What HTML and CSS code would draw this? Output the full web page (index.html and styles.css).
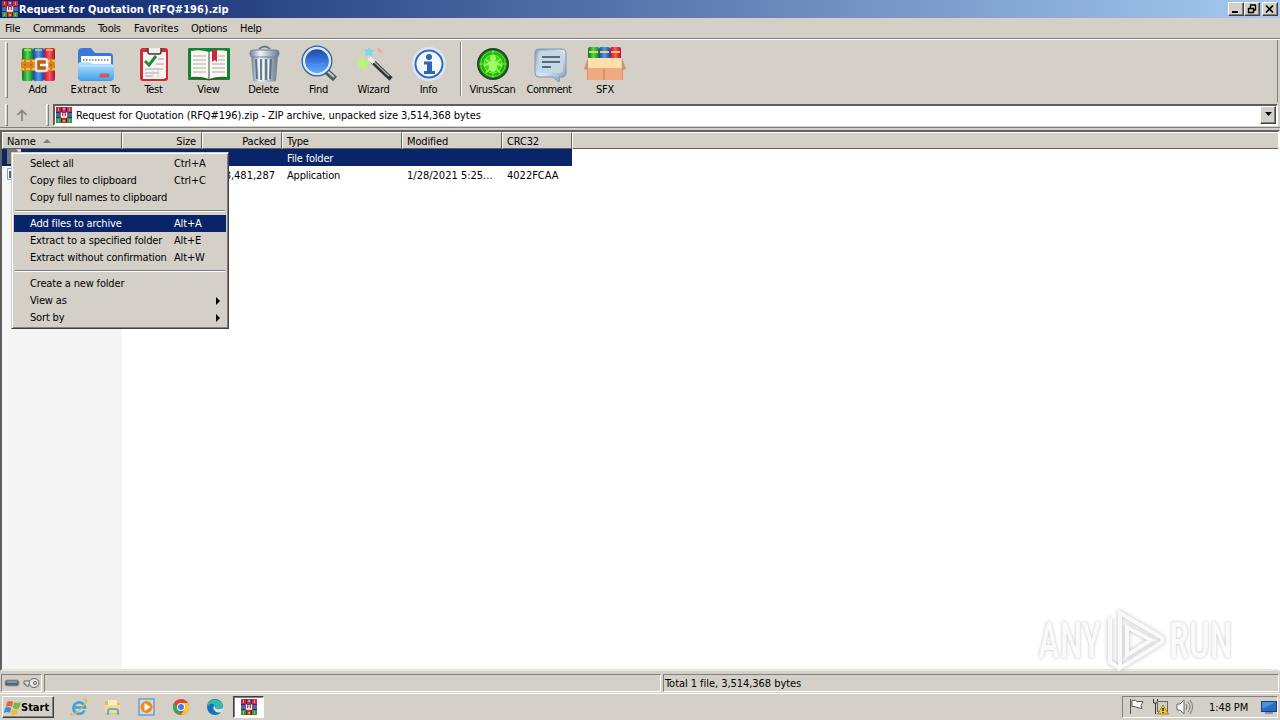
FILE: index.html
```html
<!DOCTYPE html>
<html lang="en">
<head>
    <meta charset="UTF-8">
    <meta name="viewport" content="width=device-width, initial-scale=1.0">
    <title>Request for Quotation (RFQ#196).zip</title>
    <link rel="stylesheet" href="styles.css">
</head>
<body>
    <svg class="defs" width="0" height="0">
        <defs>
            <linearGradient id="glass" x1="0" y1="0" x2="0" y2="1"><stop offset="0" stop-color="#b9e6ff"/><stop offset="1" stop-color="#439ce9"/></linearGradient>
            <linearGradient id="metal"><stop offset="0" stop-color="#718397"/><stop offset=".35" stop-color="#f1f6fa"/><stop offset=".7" stop-color="#a3b2c1"/><stop offset="1" stop-color="#66788c"/></linearGradient>
            <linearGradient id="lens" x1="0" y1="0" x2="0" y2="1"><stop offset="0" stop-color="#1c419f"/><stop offset=".55" stop-color="#397ee7"/><stop offset="1" stop-color="#65b8ff"/></linearGradient>
            <linearGradient id="bubble" x1="0" y1="0" x2="1" y2="1"><stop offset="0" stop-color="#8ba5c2"/><stop offset=".5" stop-color="#dae8f5"/><stop offset="1" stop-color="#7b96b5"/></linearGradient>
            <linearGradient id="gr"><stop offset="0" stop-color="#08751f"/><stop offset=".5" stop-color="#52d85a"/><stop offset="1" stop-color="#0b8126"/></linearGradient>
            <linearGradient id="bl"><stop offset="0" stop-color="#1749a6"/><stop offset=".5" stop-color="#5397ef"/><stop offset="1" stop-color="#1b48aa"/></linearGradient>
            <linearGradient id="rd"><stop offset="0" stop-color="#b61532"/><stop offset=".5" stop-color="#fa5665"/><stop offset="1" stop-color="#b30b2b"/></linearGradient>
            <radialGradient id="radar"><stop offset="0" stop-color="#8dff32"/><stop offset=".6" stop-color="#26c90c"/><stop offset="1" stop-color="#04870d"/></radialGradient>
            <symbol id="rar" viewBox="0 0 16 16">
                <path fill="#5a2030" d="M0 0h16v16H0z"/>
                <path fill="#c8243f" d="M0 0h5v5H0z"/><path fill="#a02f9a" d="M6 0h4v5H6z"/><path fill="#d22a58" d="M11 0h5v5h-5z"/>
                <path fill="#2f6fc4" d="M0 6h4v4H0zM12 6h4v4h-4z"/>
                <path fill="#2c9a50" d="M0 11h5v5H0zM11 11h5v5h-5z"/><path fill="#c0392b" d="M6 11h4v5H6z"/>
                <path fill="#e0a048" d="M2 1h1v3H2zM13 1h1v3h-1zM2 12h1v3H2zM13 12h1v3h-1zM7 1h2v2H7zM7 13h2v2H7z"/>
                <rect x="4" y="5" width="8" height="6" fill="#8a2e50"/>
                <path d="M5.500 5.500v4.500h5V5.500M8 6v3.500" fill="none" stroke="#fff" stroke-width="1.300"/>
            </symbol>
        </defs>
    </svg>

    <div class="window">
        <div class="titlebar">
            <svg class="icon16"><use href="#rar"/></svg>
            <h1>Request for Quotation (RFQ#196).zip</h1>
            <div class="win-buttons">
                <button><svg width="12" height="10"><path d="M2 8h6" stroke="#000" stroke-width="2"/></svg></button>
                <button><svg width="12" height="10"><path d="M4 1h6M9.500 1v5M4.500 1v3M2 4.500h6M2.500 4v5M7.500 4v5M2 8.500h6M8 6h2" fill="none" stroke="#000" stroke-width="1.400"/></svg></button>
                <button class="close"><svg width="12" height="10"><path d="M2 1.500l7 7M9 1.500l-7 7" stroke="#000" stroke-width="1.700"/></svg></button>
            </div>
        </div>

        <div class="menubar">
            <span class="m-file">File</span>
            <span class="m-commands">Commands</span>
            <span class="m-tools">Tools</span>
            <span class="m-favorites">Favorites</span>
            <span class="m-options">Options</span>
            <span>Help</span>
        </div>

        <div class="toolbar">
            <i class="grip"></i>
            <div class="tool">
                <svg width="38" height="38" viewBox="0 0 38 38">
                    <rect x="3" y="3" width="11" height="33" rx="2" fill="url(#gr)"/>
                    <rect x="14" y="3" width="11" height="33" rx="2" fill="url(#bl)"/>
                    <rect x="25" y="3" width="11" height="33" rx="2" fill="url(#rd)"/>
                    <path d="M5 5h7M16 5h7M27 5h7" stroke="#d3dc55" stroke-width="1.500"/>
                    <path d="M2 14h34v12H2z" fill="#d9851d"/>
                    <path d="M2 16h34M2 24h34" stroke="#ffc35c" stroke-width="1.500"/>
                    <path d="M6 15v10M12 15v10M32 15v10" stroke="#9f4f0d" stroke-dasharray="2 2"/>
                    <rect x="17" y="14" width="11" height="12" rx="2" fill="#b75d18" stroke="#e6e6df" stroke-width="2.500"/>
                    <path d="M21 20h8" stroke="#fff" stroke-width="2.500"/>
                </svg>
                <span>Add</span>
            </div>
            <div class="tool extract">
                <svg width="38" height="38" viewBox="0 0 38 38">
                    <path d="M1 34V7q0-4 4-4h9l4 5h15q3 0 3 4v22z" fill="#3b78de"/>
                    <path d="M4 11h30v17H4z" fill="#fff"/>
                    <path d="M6 15h26" stroke="#8197ad" stroke-width="2" stroke-dasharray="1.500 1.500"/>
                    <path d="M1 20q0-3 3-3h9l3 2h18q3 0 3 3v10q0 4-4 4H5q-4 0-4-4z" fill="url(#glass)"/>
                    <path d="M2 21h34" stroke="#c8edff"/>
                    <rect x="23" y="29" width="9" height="3" rx="1" fill="#f2543b" stroke="#a94749" stroke-width=".5"/>
                </svg>
                <span>Extract To</span>
            </div>
            <div class="tool">
                <svg width="38" height="38" viewBox="0 0 38 38">
                    <rect x="5" y="3" width="28" height="33" rx="3" fill="#d02b39"/>
                    <path d="M8 7h23v26l-3 1H8z" fill="#f7f4f1"/>
                    <path d="M13 3v4q0 2 2 2h9q2 0 2-2V3" fill="#eee" stroke="#4c3039" stroke-width="1.500"/>
                    <path d="M10 16l4 4 7-9" fill="none" stroke="#218b42" stroke-width="3"/>
                    <path d="M23 14h6M21 19h8M10 24h18M10 28h14M10 31h7" stroke="#a6a2a7"/>
                    <path d="M18 26v7M23 24v8" stroke="#ccc"/>
                </svg>
                <span>Test</span>
            </div>
            <div class="tool">
                <svg width="44" height="38" viewBox="0 0 44 38">
                    <rect x="1" y="3" width="42" height="32" rx="1" fill="#168237"/>
                    <path d="M4 6q9-2 18 1 9-3 18-1v26q-10-1-18 2-8-3-18-2z" fill="#f8f8f3"/>
                    <path d="M5 33q9-1 17 2 9-3 17-2" fill="none" stroke="#5b3b2b"/>
                    <path d="M22 7v27" stroke="#9f9f9c" stroke-width="2"/>
                    <path d="M6 11h13M6 15h13M6 19h13M6 23h13M6 27h13M25 19h13M25 23h13M25 27h13M31 11h7M31 15h7" stroke="#aaa"/>
                    <path d="M25 5h5v12l-2.500-2-2.500 2z" fill="#c82a37"/>
                </svg>
                <span>View</span>
            </div>
            <div class="tool">
                <svg width="38" height="38" viewBox="0 0 38 38">
                    <path d="M14 4q6-5 11 0" fill="none" stroke="#687a8d" stroke-width="2"/>
                    <path d="M6 9h27l-2 27q-11 2-23 0z" fill="url(#metal)"/>
                    <path d="M11 14l1 20M16 14v21M21 14v21M26 14l-1 20" stroke="#5d7086" stroke-width="1.800"/>
                    <path d="M13.500 14l1 20M18.500 14v21M23.500 14v21" stroke="#f0f5f8"/>
                    <rect x="5" y="5" width="29" height="7" rx="3" fill="url(#metal)" stroke="#718295"/>
                </svg>
                <span>Delete</span>
            </div>
            <div class="tool">
                <svg width="38" height="38" viewBox="0 0 38 38">
                    <path d="M25 25l10 9" stroke="#515961" stroke-width="6"/>
                    <path d="M25 24l9 8" stroke="#c6ced5" stroke-width="2"/>
                    <circle cx="17" cy="16" r="13.500" fill="url(#lens)" stroke="#295da9" stroke-width="4"/>
                    <circle cx="17" cy="16" r="13" fill="none" stroke="#dce8f4" stroke-width="2.500"/>
                    <path d="M10 18q7 4 14 0" fill="none" stroke="#6790dc"/>
                </svg>
                <span>Find</span>
            </div>
            <div class="tool">
                <svg width="38" height="38" viewBox="0 0 38 38">
                    <path d="M16 15l20 19" stroke="#313437" stroke-width="4.500"/>
                    <path d="M16 14l18 17" stroke="#a9aaab" stroke-width="1.500"/>
                    <path d="M14 13l5 4.500" stroke="#eee" stroke-width="4.500"/>
                    <path d="M8 11l2 5 6 1-5 3 1 5-5-3-4 1 1-5-3-4 5 1z" fill="#b2f96c"/>
                    <path d="M14 2l2 3 4 0-3 3 1 4-4-2-4 1 1-4-2-3h4z" fill="#79dbe7"/>
                    <path d="M24 2l2 3 3 1-4 2-3-2z" fill="#eeaaa3"/>
                </svg>
                <span>Wizard</span>
            </div>
            <div class="tool">
                <svg width="38" height="38" viewBox="0 0 38 38">
                    <circle cx="19" cy="19" r="16" fill="#e8f2fc" stroke="#d7e7f7" stroke-width="2"/>
                    <circle cx="19" cy="19" r="13.500" fill="#f1f8ff" stroke="#3c67b9" stroke-width="2"/>
                    <circle cx="19" cy="12" r="3" fill="#3262bc"/>
                    <path d="M14 16.500h8V26h3v3H14v-3h3v-6.500h-3z" fill="#3262bc"/>
                </svg>
                <span>Info</span>
            </div>
            <i class="separator"></i>
            <div class="tool virus">
                <svg width="38" height="38" viewBox="0 0 38 38">
                    <circle cx="19" cy="19" r="15" fill="url(#radar)" stroke="#25482b" stroke-width="2"/>
                    <g fill="none" stroke="#a3f46b" stroke-width=".7"><circle cx="19" cy="19" r="12.500"/><circle cx="19" cy="19" r="9"/><path d="M19 5v28M5 19h28"/></g>
                    <ellipse cx="19" cy="21" rx="4" ry="6" fill="#a2fa65"/><circle cx="19" cy="13" r="3" fill="#a2fa65"/>
                    <path d="M11 14l5 4-6 3M27 14l-5 4 6 3M12 28l4-5M26 28l-4-5" fill="none" stroke="#a2fa65" stroke-width="1.500"/>
                </svg>
                <span>VirusScan</span>
            </div>
            <div class="tool comment">
                <svg width="38" height="38" viewBox="0 0 38 38">
                    <path d="M9 4h22q5 0 5 5v18q0 5-4 5h-3q1 3 0 5-4-3-6-5H9q-4 0-4-4V8q0-4 4-4z" fill="url(#bubble)" stroke="#7f95ac"/>
                    <rect x="8" y="6" width="25" height="22" rx="3" fill="#c5d6e7"/>
                    <path d="M12 12h18M12 17h18M12 22h9" stroke="#34475e" stroke-width="1.500"/>
                </svg>
                <span>Comment</span>
            </div>
            <div class="tool sfx">
                <svg width="42" height="38" viewBox="0 0 42 38">
                    <rect x="4" y="2" width="11" height="17" rx="2" fill="url(#gr)"/><rect x="15" y="2" width="11" height="17" rx="2" fill="url(#bl)"/><rect x="26" y="2" width="11" height="17" rx="2" fill="url(#rd)"/>
                    <path d="M5 7h9M16 7h9M27 7h9" stroke="#f2d242" stroke-width="2"/>
                    <path d="M3 13h34v11H4z" fill="#fbe0ab"/>
                    <path d="M4 13L0 24l3 1v10h36V25l3-1-4-11v11H4z" fill="#d98e68"/>
                    <path d="M4 23h34v12H4z" fill="#edab84"/><path d="M20 24v11" stroke="#c77753"/>
                </svg>
                <span>SFX</span>
            </div>
        </div>

        <div class="addressbar">
            <i class="grip"></i>
            <svg class="up" width="14" height="14"><path d="M7 13V3M2.500 7L7 2.500 11.500 7" fill="none" stroke="#858585" stroke-width="1.700"/></svg>
            <i class="grip second"></i>
            <div class="combo">
                <svg class="icon16"><use href="#rar"/></svg>
                <span>Request for Quotation (RFQ#196).zip - ZIP archive, unpacked size 3,514,368 bytes</span>
                <button><svg width="9" height="5"><path d="M1 0h7L4.500 4z"/></svg></button>
            </div>
        </div>

        <div class="list">
            <div class="row head">
                <div class="col-name">Name <i class="sort"></i></div>
                <div class="col-size">Size</div>
                <div class="col-packed">Packed</div>
                <div class="col-type">Type</div>
                <div class="col-modified">Modified</div>
                <div class="col-crc">CRC32</div>
                <div class="col-rest"></div>
            </div>
            <div class="row selected">
                <div class="col-name"><svg width="16" height="17"><path d="M0 0h9l2 3h3v12H0z" fill="#77777b"/><path d="M9 0h5v3h-3z" fill="#d5d1cc"/></svg></div>
                <div class="col-size"></div>
                <div class="col-packed"></div>
                <div class="col-type">File folder</div>
                <div class="col-modified"></div>
                <div class="col-crc"></div>
            </div>
            <div class="row">
                <div class="col-name"><svg width="16" height="17"><path d="M.5 2.500h14v11H.5z" fill="#fff" stroke="#8ca0b5"/><path d="M2 5h11v7H2z" fill="#34699c"/></svg></div>
                <div class="col-size"></div>
                <div class="col-packed">3,481,287</div>
                <div class="col-type">Application</div>
                <div class="col-modified">1/28/2021 5:25...</div>
                <div class="col-crc">4022FCAA</div>
            </div>
        </div>

        <div class="statusbar">
            <div class="pane drive">
                <svg width="37" height="16">
                    <rect x="1" y="5" width="14" height="6" rx="2" fill="#56616a" stroke="#949da3"/><path d="M3 7h10" stroke="#bcc7cd"/>
                    <path d="M20 6h7v3h-2v2h-3V9h-2z" fill="#e5e5e2" stroke="#656565"/>
                    <ellipse cx="30" cy="8" rx="5" ry="4.500" fill="#e5e5e2" stroke="#656565"/><circle cx="31" cy="8" r="1.500" fill="#fff" stroke="#555"/>
                </svg>
            </div>
            <div class="pane selection"></div>
            <div class="pane total">Total 1 file, 3,514,368 bytes</div>
        </div>
    </div>

    <div class="taskbar">
        <button class="start">
            <svg width="19" height="17">
                <path d="M4 3q4-2 6 0L9 8Q6 6 3 8z" fill="#e6662b"/><path d="M11 3q3 2 7 0l-2 6q-3 2-6 0z" fill="#73b943"/>
                <path d="M2 9q4-2 6 0l-1 5q-3-2-6 0z" fill="#3b8dd5"/><path d="M9 10q3 2 6 0l-1 5q-3 2-6 0z" fill="#f3bd32"/>
            </svg>
            Start
        </button>
        <div class="apps">
            <svg width="18" height="18">
                <path d="M14.500 12.500A5.800 5.800 0 1 1 15 9.500H5" fill="none" stroke="#38a6dd" stroke-width="2.600"/>
                <path d="M2 15Q-1 18 3 16.500 11 13 16 4q2-4-3-2" fill="none" stroke="#e7b944" stroke-width="1.300"/>
            </svg>
            <svg width="18" height="18">
                <path d="M1 3h6l1 2h8v11H1z" fill="#e7bb59"/><path d="M4 2h9v6H4z" fill="#f8edc3"/>
                <path d="M1 7h15v8H1z" fill="#f4db8d"/><path d="M4 17v-4q0-2 2-2h6q2 0 2 2v4" fill="none" stroke="#69add6" stroke-width="2.200"/>
            </svg>
            <svg width="18" height="18">
                <rect x="1" y="1" width="15" height="16" fill="#c9dceb" stroke="#3e83bc"/>
                <circle cx="8.500" cy="9" r="6" fill="#f28a19"/><path d="M6.500 5l6 4-6 4z" fill="#fff"/>
            </svg>
            <svg width="18" height="18">
                <circle cx="9" cy="9" r="8" fill="#dc4535"/><path d="M2 5l5 7 2 5A8 8 0 0 1 2 5z" fill="#35a85a"/>
                <path d="M9 5h7a8 8 0 0 1-7 12l4-7z" fill="#f3c935"/><circle cx="9" cy="9" r="4" fill="#fff"/><circle cx="9" cy="9" r="3" fill="#397fe5"/>
            </svg>
            <svg width="18" height="18">
                <circle cx="9" cy="9" r="8" fill="#1671b6"/><path d="M2 5Q9-2 16 5q2 4-1 6-4 2-6-1 2-3-2-4Q4 5 2 8z" fill="#39bca4"/>
                <path d="M9 7q-4 3 1 7 3 1 6 0l2-5q-3 3-7 2-3-1-2-4z" fill="#d5e5e7"/>
            </svg>
        </div>
        <div class="task"><svg class="icon16"><use href="#rar"/></svg></div>
        <div class="tray">
            <svg width="18" height="18"><path d="M2.500 1v15M4 2.500q4-1 5 1h6l-2 4 1 3-5-1q-1-1.500-5-1z" fill="#fff" stroke="#555"/></svg>
            <svg width="18" height="18">
                <path d="M1.500 1v4h4V1M3.500 5v11" fill="none" stroke="#333"/><rect x="5.500" y="3.500" width="10" height="10" fill="#ccd1c6" stroke="#666"/>
                <path d="M11 7l5.500 9h-11z" fill="#f5cd23" stroke="#a97f17"/><path d="M11 10v3M11 14v1" stroke="#222" stroke-width="1.500"/>
            </svg>
            <svg width="18" height="18"><path d="M1 6h3l4-4v14l-4-4H1z" fill="#fff" stroke="#666"/><path d="M10 6q2 3 0 6M12 4q4 5 0 10M14 2q5 7 0 14" fill="none" stroke="#777"/></svg>
            <span class="clock">1:48 PM</span>
            <svg class="desktop" width="16" height="16"><rect x=".5" y="2.500" width="15" height="10" fill="#286bc4" stroke="#183e79"/><path d="M1 10l14-7H1z" fill="#4b91df"/><path d="M4 14h8" stroke="#8196b5" stroke-width="2"/></svg>
        </div>
    </div>

    <div class="context-menu">
        <div class="item"><span>Select all</span><span>Ctrl+A</span></div>
        <div class="item"><span>Copy files to clipboard</span><span>Ctrl+C</span></div>
        <div class="item"><span>Copy full names to clipboard</span></div>
        <hr>
        <div class="item active"><span>Add files to archive</span><span>Alt+A</span></div>
        <div class="item"><span>Extract to a specified folder</span><span>Alt+E</span></div>
        <div class="item"><span>Extract without confirmation</span><span>Alt+W</span></div>
        <hr>
        <div class="item"><span>Create a new folder</span></div>
        <div class="item"><span>View as</span><i></i></div>
        <div class="item"><span>Sort by</span><i></i></div>
    </div>

    <div class="watermark">
        <span>ANY</span>
        <svg width="58" height="62" viewBox="0 0 58 62">
            <path d="M13 3l41 24q3 3 0 6L13 58zM3 8v44l9 6M20 17l24 13-24 15z"/>
        </svg>
        <span>RUN</span>
    </div>
</body>
</html>
```
FILE: styles.css
```css
* {
    box-sizing: border-box;
}
body {
    margin: 0;
    width: 1280px;
    height: 720px;
    overflow: hidden;
    display: flex;
    flex-direction: column;
    position: relative;
    background-color: #d4d0c8;
    font-family: "DejaVu Sans Condensed", "DejaVu Sans", sans-serif;
    font-stretch: condensed;
    font-size: 11px;
    letter-spacing: -0.3px;
    color: #000;
    white-space: nowrap;
}
button {
    font: inherit;
    color: #000;
    padding: 0;
    background-color: #d4d0c8;
    border: 1px solid;
    border-color: #fff #404040 #404040 #fff;
    box-shadow: inset -1px -1px #808080;
}
svg {
    display: block;
    flex: none;
}
.defs {
    position: absolute;
}
.icon16 {
    width: 16px;
    height: 16px;
}
.window {
    height: 693px;
    display: flex;
    flex-direction: column;
}
.titlebar {
    height: 18px;
    display: flex;
    align-items: center;
    padding: 0 2px;
    background: linear-gradient(to right, #0a246a, #a6caf0);
}
.titlebar h1 {
    margin: 0 0 0 1px;
    flex: 1;
    font-size: 11px;
    color: #fff;
    letter-spacing: 0.03px;
}
.win-buttons {
    display: flex;
}
.win-buttons button {
    width: 16px;
    height: 14px;
    display: flex;
    align-items: center;
    justify-content: center;
}
.win-buttons .close {
    margin-left: 2px;
}
.menubar {
    height: 20px;
    display: flex;
    align-items: center;
    padding-left: 5px;
}
.m-file { width: 28px; }
.m-commands {
    width: 65px;
    letter-spacing: -0.5px;
}
.m-tools { width: 36px; }
.m-favorites {
    width: 57px;
    letter-spacing: 0;
}
.m-options { width: 49px; }
.toolbar {
    height: 64px;
    display: flex;
    padding: 3px 0 0 5px;
    border-top: 1px solid #808080;
    box-shadow: inset 0 1px #fff, inset -2px 0 #d4d0c8, inset -3px 0 #808080;
}
.grip {
    width: 3px;
    height: 56px;
    margin-right: 2px;
    border: 1px solid;
    border-color: #fff #808080 #808080 #fff;
}
.tool {
    width: 55px;
    padding-top: 3px;
    display: flex;
    flex-direction: column;
    align-items: center;
}
.tool span {
    line-height: 12px;
    margin-top: 1px;
}
.extract {
    width: 61px;
    letter-spacing: 0.1px;
}
.separator {
    width: 2px;
    height: 54px;
    margin: 0 3px 0 4px;
    border-left: 1px solid #808080;
    border-right: 1px solid #fff;
}
.comment {
    width: 58px;
    letter-spacing: -0.5px;
}
.sfx {
    width: 54px;
}
.addressbar {
    height: 26px;
    display: flex;
    align-items: center;
    padding: 0 2px 0 5px;
    border-bottom: 1px solid #808080;
}
.addressbar .grip {
    height: 22px;
}
.up {
    margin: 0 17px 0 5px;
}
.addressbar .second {
    margin-right: 4px;
}
.combo {
    flex: 1;
    height: 22px;
    display: flex;
    align-items: center;
    padding-left: 1px;
    background-color: #fff;
    border: 2px solid;
    border-color: #606060 #fff #fff #606060;
}
.combo span {
    flex: 1;
    padding: 1px 0 0 4px;
    letter-spacing: -0.07px;
}
.combo button {
    width: 16px;
    height: 18px;
    display: flex;
    align-items: center;
    justify-content: center;
}
.list {
    flex: 1;
    margin-top: 2px;
    display: flex;
    flex-direction: column;
    border: 2px solid;
    border-color: #606060 #fff #e8e6e2 #606060;
    background: linear-gradient(to right, #f5f5f5 120px, #fff 120px);
    letter-spacing: 0;
}
.row {
    display: flex;
    height: 17px;
    line-height: 19px;
}
.row > div {
    padding: 0 5px;
}
.row .col-packed {
    padding-right: 7px;
}
.head {
    background-color: #d4d0c8;
    letter-spacing: -0.15px;
}
.head > div {
    border-top: 1px solid #fff;
    border-left: 1px solid #fff;
    border-right: 1px solid #606060;
    border-bottom: 1px solid #606060;
    line-height: 17px;
}
.head > div,
.head .col-packed {
    padding: 0 5px 0 4px;
}
.row .col-name { width: 120px; }
.row .col-size { width: 80px; text-align: right; }
.row .col-packed { width: 80px; text-align: right; }
.row .col-type {
    width: 120px;
    letter-spacing: -0.2px;
}
.row .col-modified { width: 100px; }
.row .col-crc { width: 70px; }
.row .col-rest { flex: 1; border-right: none; }
.selected {
    width: 570px;
    background-color: #0a246a;
    color: #fff;
}
.sort {
    display: inline-block;
    margin: 0 0 2px 4px;
    border: 4px solid transparent;
    border-top: none;
    border-bottom-color: #808080;
}
.statusbar {
    height: 22px;
    display: flex;
    gap: 2px;
    padding: 3px 1px 1px;
}
.pane {
    border: 1px solid;
    border-color: #808080 #fff #fff #808080;
    line-height: 18px;
}
.drive {
    width: 41px;
    padding-left: 2px;
}
.selection {
    width: 617px;
}
.total {
    flex: 1;
    padding-left: 1px;
    letter-spacing: -0.05px;
}
.taskbar {
    height: 27px;
    display: flex;
    align-items: center;
    padding: 0 2px;
    border-top: 1px solid #fff;
}
.start {
    width: 52px;
    height: 22px;
    display: flex;
    align-items: center;
    font-weight: bold;
    letter-spacing: 0;
}
.start svg {
    margin-right: -1px;
}
.apps {
    display: flex;
    gap: 16px;
    padding-left: 16px;
}
.task {
    width: 31px;
    height: 22px;
    margin-left: 9px;
    padding: 2px 7px;
    background-color: #fff;
    border: 1px solid;
    border-color: #404040 #fff #fff #404040;
    box-shadow: inset 1px 1px #808080;
}
.tray {
    margin-left: auto;
    width: 156px;
    height: 22px;
    display: flex;
    align-items: center;
    gap: 6px;
    padding-left: 5px;
    border: 1px solid;
    border-color: #808080 #fff #fff #808080;
}
.clock {
    margin-left: 9px;
    letter-spacing: -0.1px;
}
.desktop {
    margin-left: auto;
}
.context-menu {
    position: absolute;
    left: 11px;
    top: 152px;
    width: 218px;
    height: 177px;
    padding: 2px;
    background-color: #d4d0c8;
    border: 1px solid;
    border-color: #d4d0c8 #404040 #404040 #d4d0c8;
    box-shadow: inset 1px 1px #fff, inset -1px -1px #808080;
    letter-spacing: -0.17px;
}
.item {
    height: 17px;
    line-height: 16px;
    display: flex;
    align-items: center;
    padding-left: 16px;
}
.item span:first-child {
    width: 144px;
}
.item i {
    margin-left: 42px;
    border: 4px solid transparent;
    border-right: none;
    border-left-color: #000;
}
.context-menu hr {
    height: 2px;
    margin: 4px 1px 3px;
    border: none;
    border-top: 1px solid #808080;
    border-bottom: 1px solid #fff;
}
.active {
    background-color: #0a246a;
    color: #fff;
}
.watermark {
    position: absolute;
    left: 1038px;
    top: 610px;
    width: 196px;
    height: 62px;
    display: flex;
    align-items: center;
    justify-content: space-between;
    font-family: Roboto, sans-serif;
    font-size: 46px;
    font-weight: 500;
    letter-spacing: 0;
    color: #fafafa;
    text-shadow: 0 0 3px #bbb;
}
.watermark span {
    width: 65px;
    transform: scale(0.8, 1.08);
    transform-origin: left center;
}
.watermark svg {
    fill: none;
    stroke: #fafafa;
    stroke-width: 4px;
    filter: drop-shadow(0 0 2px #bbb);
}
```
